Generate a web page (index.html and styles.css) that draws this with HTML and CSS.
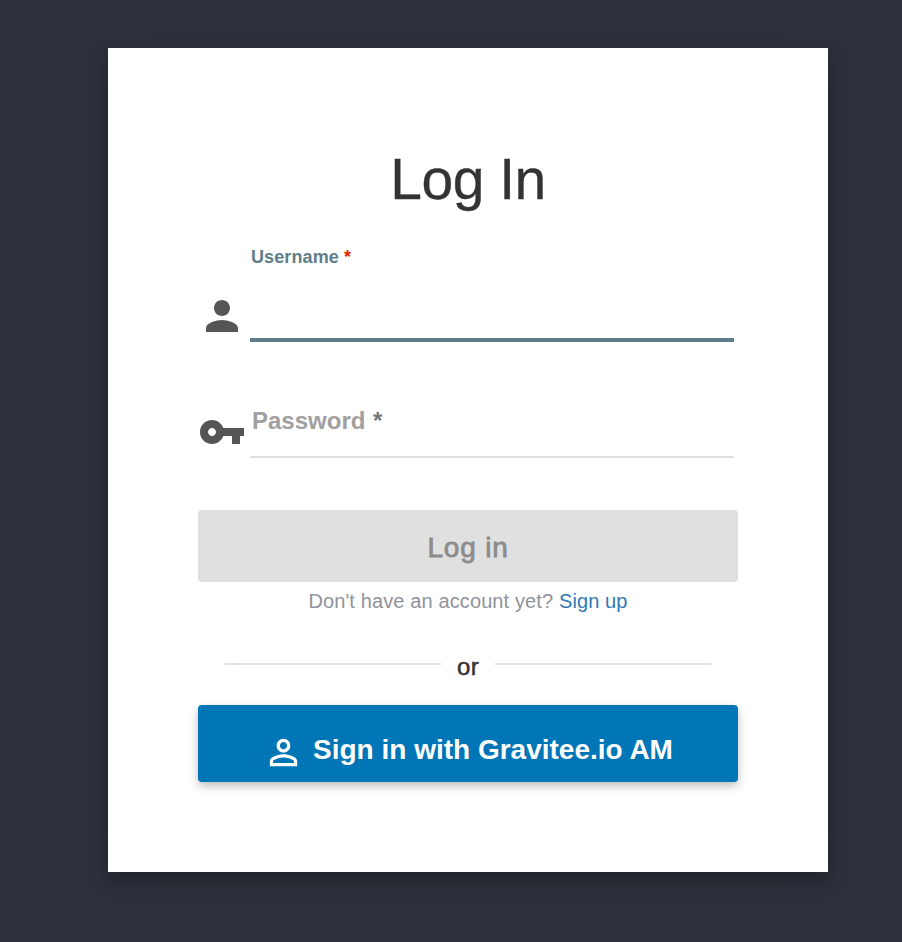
FILE: index.html
```html
<!DOCTYPE html>
<html lang="en">
<head>
<meta charset="utf-8">
<title>Log In</title>
<link rel="stylesheet" href="styles.css">
</head>
<body>
<main class="card">
  <h1 class="title">Log In</h1>
  <form class="form">
    <div class="field field-user">
      <svg class="field-icon" viewBox="0 0 24 24"><path d="M12 12c2.210 0 4-1.790 4-4s-1.790-4-4-4-4 1.790-4 4 1.790 4 4 4zm0 2c-2.670 0-8 1.340-8 4v2h16v-2c0-2.660-5.330-4-8-4z"/></svg>
      <div class="control control-focused">
        <label class="label-small">Username <span class="required">*</span></label>
      </div>
    </div>
    <div class="field field-password">
      <svg class="field-icon" viewBox="0 0 24 24"><path d="M12.650 10C11.830 7.670 9.610 6 7 6c-3.310 0-6 2.690-6 6s2.690 6 6 6c2.610 0 4.830-1.670 5.650-4H17v4h4v-4h2v-4H12.650zM7 14c-1.100 0-2-.9-2-2s.9-2 2-2 2 .9 2 2-.9 2-2 2z"/></svg>
      <div class="control">
        <label class="label-large">Password <span class="star">*</span></label>
      </div>
    </div>
    <button class="button button-disabled" type="button" disabled>Log in</button>
    <p class="signup">Don't have an account yet? <a class="link">Sign up</a></p>
    <div class="divider"><span class="line"></span><span class="or">or</span><span class="line"></span></div>
    <button class="button button-primary" type="button">
      <svg class="button-icon" viewBox="0 0 24 24"><path d="M12 5.900c1.160 0 2.100.94 2.100 2.100s-.94 2.100-2.100 2.100S9.900 9.160 9.900 8s.94-2.100 2.100-2.100m0 9c2.970 0 6.100 1.460 6.100 2.100v1.100H5.900V17c0-.64 3.130-2.100 6.100-2.100M12 4C9.790 4 8 5.790 8 8s1.790 4 4 4 4-1.790 4-4-1.790-4-4-4zm0 9c-2.670 0-8 1.340-8 4v3h16v-3c0-2.660-5.330-4-8-4z"/></svg>
      <span>Sign in with Gravitee.io AM</span>
    </button>
  </form>
</main>
</body>
</html>
```
FILE: styles.css
```css
* { box-sizing: border-box; }
body {
  margin: 0;
  height: 942px;
  padding: 48px 74px 70px 108px;
  overflow: hidden;
  background: #2f323e;
  font-family: "Liberation Sans", Arial, sans-serif;
  color: #333;
}
.card {
  width: 720px;
  height: 824px;
  padding: 99px 90px 90px;
  background: #fff;
  box-shadow: 0 0 40px rgba(38, 50, 56, .5), 0 8px 20px rgba(0, 0, 0, .38);
}
.title {
  margin: 0;
  height: 65px;
  font-size: 57px;
  line-height: 64px;
  font-weight: 400;
  letter-spacing: -.5px;
  text-align: center;
  -webkit-text-stroke: .3px #333;
}
.form { display: flex; flex-direction: column; }
.field { display: flex; width: 536px; }
.field-user { margin-top: 34px; height: 96px; }
.field-password { margin-top: 54px; height: 62px; }
.field-icon { flex: none; width: 48px; height: 48px; margin-right: 4px; fill: #555; }
.field-user .field-icon { margin-top: 46px; }
.field-password .field-icon { margin-top: 12px; }
.control { flex: 1; border-bottom: 2px solid #e0e0e0; font-weight: 700; }
.control-focused { border-bottom: 4px solid #607d8b; }
.label-small { display: block; font-size: 18px; line-height: 22px; letter-spacing: .1px; color: #607d8b; padding-left: 1px; }
.required { color: #dd2c00; }
.label-large { display: block; padding: 11px 0 0 2px; font-size: 24px; line-height: 28px; color: #a0a0a0; }
.star { margin-left: 1px; color: #777; }
.button {
  display: flex;
  align-items: center;
  justify-content: center;
  width: 540px;
  padding: 0;
  border: 0;
  border-radius: 4px;
  font-family: inherit;
  font-size: 28px;
}
.button-disabled {
  height: 72px;
  margin-top: 52px;
  padding-top: 3px;
  background: #e0e0e0;
  color: #8c8c8c;
  letter-spacing: .8px;
  -webkit-text-stroke: .8px #8c8c8c;
}
.signup { margin: 5px 0 0; height: 29px; font-size: 20px; line-height: 28px; letter-spacing: .12px; text-align: center; color: #90939b; }
.link { color: #337ab7; }
.divider { display: flex; justify-content: center; height: 30px; margin-top: 37px; }
.line { width: 216px; height: 2px; margin-top: 10px; background: #dbe2e0; }
.or { width: 54px; font-size: 24px; line-height: 28px; letter-spacing: .4px; text-align: center; -webkit-text-stroke: .5px #333; }
.button-primary {
  height: 77px;
  margin-top: 22px;
  padding-top: 12px;
  background: #0076b6;
  color: #fff;
  font-weight: 700;
  box-shadow: 0 4px 10px rgba(0, 0, 0, .26);
}
.button-icon { width: 41px; height: 41px; margin: 5px 9px 0 0; fill: #fff; }
```
